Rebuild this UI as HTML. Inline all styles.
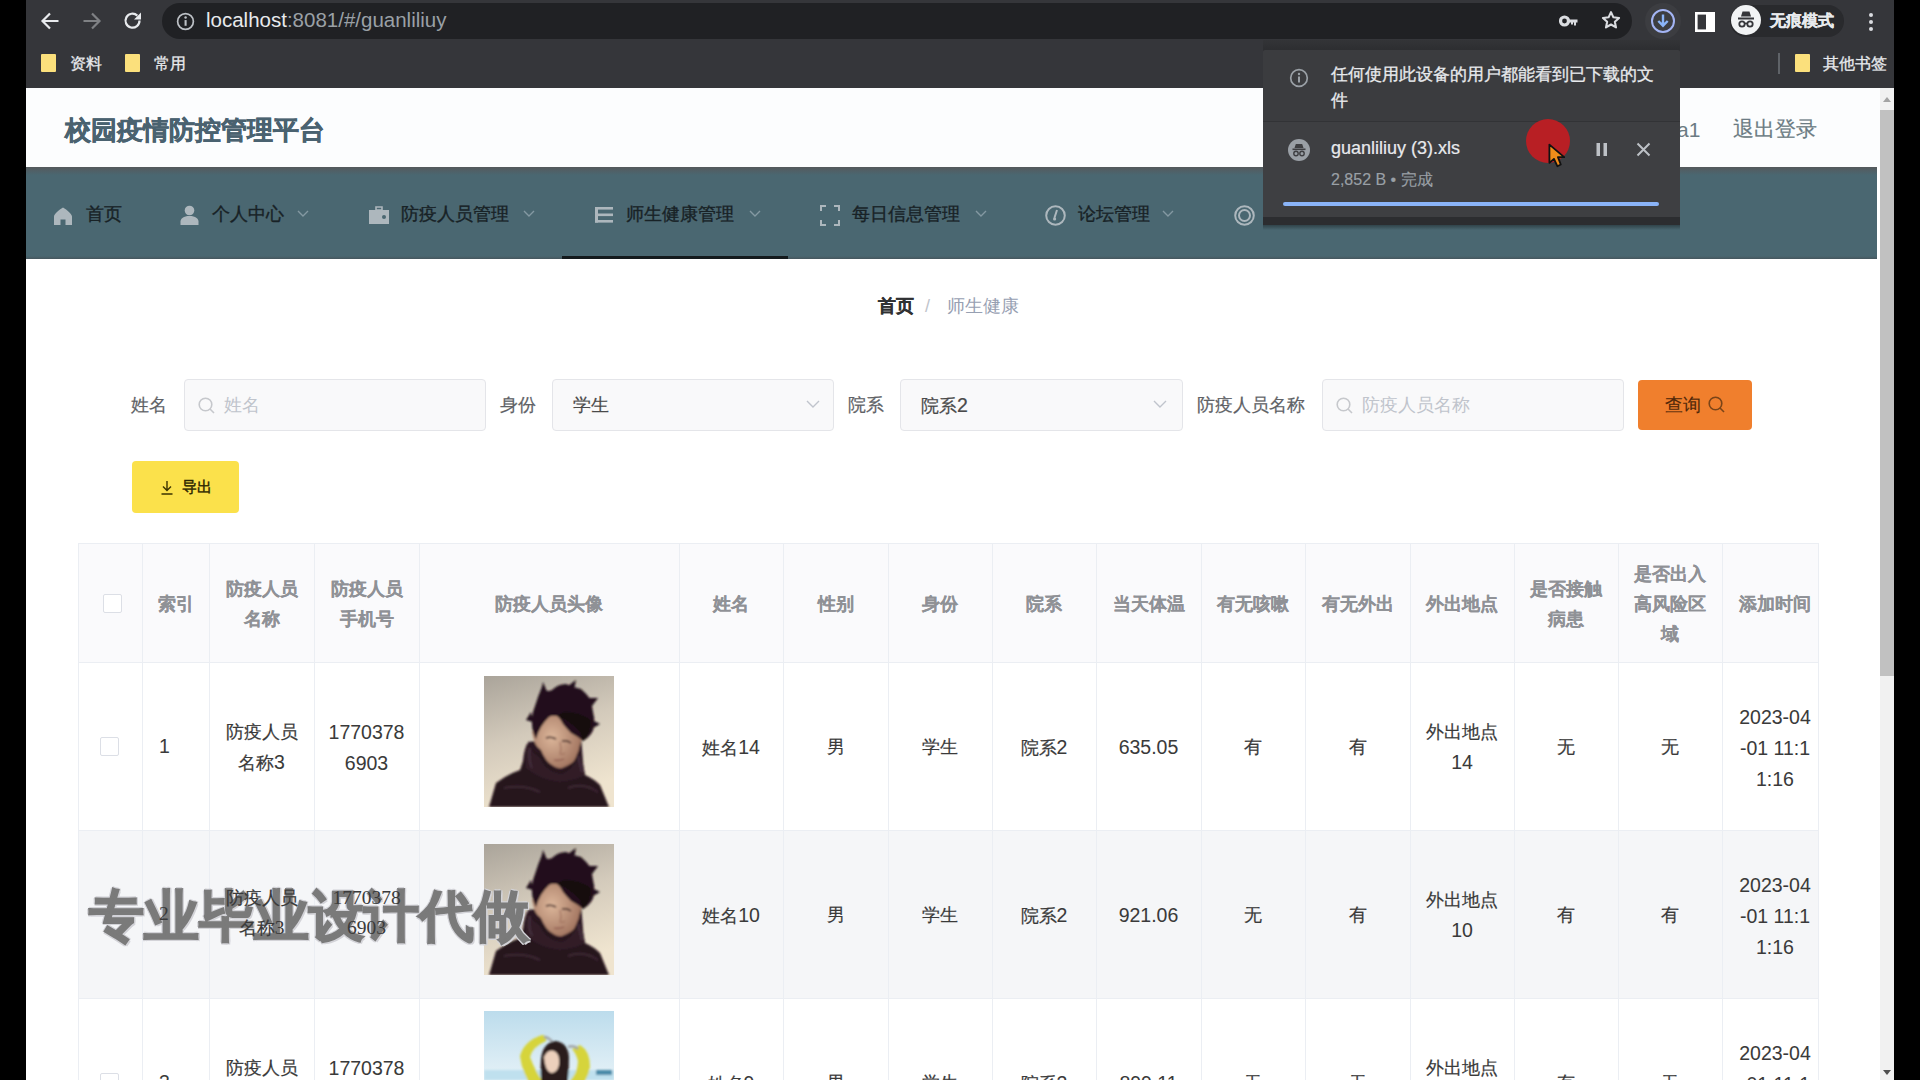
<!DOCTYPE html>
<html><head><meta charset="utf-8">
<style>
*{box-sizing:border-box;margin:0;padding:0}
html,body{width:1920px;height:1080px;overflow:hidden;background:#000;font-family:"Liberation Sans",sans-serif}
.a{position:absolute}
.d{font-size:19.5px;-webkit-text-stroke-width:0.05px}
.bm{font-size:16px;color:#e8eaed;white-space:nowrap;line-height:18px;-webkit-text-stroke:0.3px #e8eaed}
.fold{width:15px;height:18px;background:#fbe07c;border-radius:1px}
</style></head><body>
<div class="a" style="left:26px;top:0px;width:1868px;height:88px;background:#35363a;"></div>
<svg class="a" style="left:40px;top:11px" width="20" height="20" viewBox="0 0 20 20"><path d="M18.5 10H3M10 2.5L2.5 10l7.5 7.5" stroke="#e8eaed" stroke-width="2.2" fill="none"/></svg>
<svg class="a" style="left:82px;top:11px" width="20" height="20" viewBox="0 0 20 20"><path d="M1.5 10H17M10 2.5l7.5 7.5-7.5 7.5" stroke="#7f8184" stroke-width="2.2" fill="none"/></svg>
<svg class="a" style="left:123px;top:11px" width="20" height="20" viewBox="0 0 20 20"><path d="M16.5 9.5A7 7 0 1 1 14.3 4.6" stroke="#e8eaed" stroke-width="2.2" fill="none"/><path d="M18 1.5v7h-7z" fill="#e8eaed"/></svg>
<div class="a" style="left:162px;top:3px;width:1470px;height:36px;background:#202124;border-radius:18px"></div>
<svg class="a" style="left:176px;top:12px" width="19" height="19" viewBox="0 0 20 20"><circle cx="10" cy="10" r="8.3" stroke="#bdc1c6" stroke-width="1.8" fill="none"/><rect x="9" y="8.5" width="2.2" height="6" fill="#bdc1c6"/><circle cx="10.1" cy="5.9" r="1.3" fill="#bdc1c6"/></svg>
<div class="a" style="left:206px;top:8px;font-size:20.5px;line-height:24px;color:#9aa0a6;white-space:nowrap;letter-spacing:0px"><span style="color:#e8eaed">localhost</span>:8081/#/guanliliuy</div>
<svg class="a" style="left:1559px;top:13px" width="20" height="16" viewBox="0 0 20 16"><circle cx="5.5" cy="8" r="4" stroke="#dadce0" stroke-width="3.2" fill="none"/><path d="M9.5 6.5h9v3h-1.5v3h-2v-3h-1v2h-2v-2h-2.5z" fill="#dadce0"/></svg>
<svg class="a" style="left:1601px;top:10px" width="20" height="20" viewBox="0 0 24 24"><path d="M12 2.5l2.9 6.3 6.8.7-5.1 4.6 1.4 6.8L12 17.4l-6 3.5 1.4-6.8-5.1-4.6 6.8-.7z" stroke="#dadce0" stroke-width="2.5" fill="none" stroke-linejoin="round"/></svg>
<div class="a" style="left:1645px;top:3px;width:36px;height:36px;background:#3c3d41;border-radius:18px"></div>
<svg class="a" style="left:1650px;top:8px" width="26" height="26" viewBox="0 0 26 26"><circle cx="13" cy="13" r="11" stroke="#a3b4f4" stroke-width="2" fill="none"/><path d="M13 6.5v11M8.3 13l4.7 4.7 4.7-4.7" stroke="#8ab4f8" stroke-width="2.4" fill="none"/></svg>
<svg class="a" style="left:1695px;top:12px" width="20" height="20" viewBox="0 0 20 20"><rect x="1.3" y="1.3" width="17.4" height="17.4" stroke="#fff" stroke-width="2.6" fill="none"/><rect x="11" y="1" width="8" height="18" fill="#fff"/></svg>
<div class="a" style="left:1730px;top:5px;width:114px;height:32px;background:#292a2d;border-radius:16px"></div>
<div class="a" style="left:1731px;top:5px;width:30px;height:30px;background:#f1f3f4;border-radius:15px"></div>
<svg class="a" style="left:1735px;top:9px" width="22" height="22" viewBox="0 0 22 22"><path d="M6 7.5l1.5-5h7l1.5 5z" fill="#35363a"/><rect x="3" y="8.5" width="16" height="2" fill="#35363a"/><circle cx="7" cy="15" r="2.7" stroke="#35363a" stroke-width="1.8" fill="none"/><circle cx="15" cy="15" r="2.7" stroke="#35363a" stroke-width="1.8" fill="none"/><path d="M9.7 14.5h2.6" stroke="#35363a" stroke-width="1.6"/></svg>
<div class="a bm" style="left:1770px;top:12px;font-weight:bold">无痕模式</div>
<svg class="a" style="left:1868px;top:12px" width="6" height="20" viewBox="0 0 6 20"><circle cx="3" cy="3" r="2" fill="#dadce0"/><circle cx="3" cy="10" r="2" fill="#dadce0"/><circle cx="3" cy="17" r="2" fill="#dadce0"/></svg>
<div class="a fold" style="left:41px;top:54px"></div>
<div class="a" style="left:70px;top:55px;font-size:16px;line-height:18px;color:#e8eaed;font-weight:normal;white-space:nowrap;-webkit-text-stroke:0.3px #e8eaed;">资料</div>
<div class="a fold" style="left:125px;top:54px"></div>
<div class="a" style="left:154px;top:55px;font-size:16px;line-height:18px;color:#e8eaed;font-weight:normal;white-space:nowrap;-webkit-text-stroke:0.3px #e8eaed;">常用</div>
<div class="a" style="left:1778px;top:53px;width:2px;height:21px;background:#5f6368;"></div>
<div class="a fold" style="left:1795px;top:54px"></div>
<div class="a" style="left:1823px;top:55px;font-size:16px;line-height:18px;color:#e8eaed;font-weight:normal;white-space:nowrap;-webkit-text-stroke:0.3px #e8eaed;">其他书签</div>
<div class="a" style="left:26px;top:88px;width:1854px;height:992px;background:#fff;"></div>
<div class="a" style="left:26px;top:88px;width:1854px;height:79px;background:#fcfdfe;"></div>
<div class="a" style="left:65px;top:113px;font-size:26px;line-height:35px;color:#4a6270;font-weight:bold;white-space:nowrap;-webkit-text-stroke:0.5px #4a6270;">校园疫情防控管理平台</div>
<div class="a" style="left:1677px;top:119px;font-size:21px;line-height:21px;color:#6b7b83;font-weight:normal;white-space:nowrap;">a1</div>
<div class="a" style="left:1733px;top:118px;font-size:21px;line-height:21px;color:#6b7b83;font-weight:normal;white-space:nowrap;-webkit-text-stroke:0.2px #6b7b83;">退出登录</div>
<div class="a" style="left:26px;top:167px;width:1851px;height:92px;background:#4a6771;"></div>
<div class="a" style="left:26px;top:167px;width:1851px;height:8px;background:linear-gradient(#55595c,rgba(74,103,113,0));"></div>
<div class="a" style="left:26px;top:256px;width:1851px;height:3px;background:linear-gradient(rgba(74,103,113,0),#46565d);"></div>
<div class="a" style="left:562px;top:256px;width:226px;height:3px;background:#141a1d;"></div>
<svg class="a" style="left:53px;top:206px" width="20" height="19" viewBox="0 0 20 19"><path d="M10 1.5C6 4 1 8 1 10.5V19h6.5v-5.5h5V19H19v-8.5C19 8 14 4 10 1.5z" fill="#adb7bd"/></svg>
<svg class="a" style="left:180px;top:205px" width="19" height="20" viewBox="0 0 19 20"><circle cx="9.5" cy="5.5" r="4.8" fill="#adb7bd"/><path d="M0.5 20v-3.5c0-3 3-5.5 9-5.5s9 2.5 9 5.5V20z" fill="#adb7bd"/></svg>
<svg class="a" style="left:369px;top:206px" width="20" height="18" viewBox="0 0 20 18"><path d="M7 1h6v3H7z" stroke="#adb7bd" stroke-width="1.6" fill="none"/><rect x="0" y="4" width="20" height="14" fill="#adb7bd"/><circle cx="15" cy="11" r="2" fill="#4a6771"/></svg>
<svg class="a" style="left:595px;top:207px" width="18" height="16" viewBox="0 0 18 16"><rect x="0" y="0" width="18" height="2.6" fill="#adb7bd"/><rect x="0" y="6.5" width="18" height="2.6" fill="#adb7bd"/><rect x="0" y="13" width="18" height="2.6" fill="#adb7bd"/><rect x="0" y="0" width="3" height="15.6" fill="#adb7bd"/></svg>
<svg class="a" style="left:820px;top:205px" width="20" height="21" viewBox="0 0 20 21"><path d="M1 6V1h5M14 1h5v5M19 15v5h-5M6 20H1v-5" stroke="#adb7bd" stroke-width="2" fill="none"/></svg>
<svg class="a" style="left:1045px;top:205px" width="21" height="21" viewBox="0 0 21 21"><circle cx="10.5" cy="10.5" r="9.3" stroke="#adb7bd" stroke-width="2" fill="none"/><path d="M12 5l-2.6 8" stroke="#adb7bd" stroke-width="2"/><circle cx="9.6" cy="14" r="1.6" fill="#adb7bd"/></svg>
<svg class="a" style="left:1234px;top:205px" width="21" height="21" viewBox="0 0 21 21"><circle cx="10.5" cy="10.5" r="9.3" stroke="#adb7bd" stroke-width="2" fill="none"/><circle cx="10.5" cy="10.5" r="5.5" stroke="#adb7bd" stroke-width="2" fill="none"/></svg>
<div class="a" style="left:86px;top:205px;font-size:18px;line-height:18px;color:#182226;font-weight:normal;white-space:nowrap;-webkit-text-stroke:0.35px #182226;">首页</div>
<div class="a" style="left:212px;top:205px;font-size:18px;line-height:18px;color:#182226;font-weight:normal;white-space:nowrap;-webkit-text-stroke:0.35px #182226;">个人中心</div>
<div class="a" style="left:401px;top:205px;font-size:18px;line-height:18px;color:#182226;font-weight:normal;white-space:nowrap;-webkit-text-stroke:0.35px #182226;">防疫人员管理</div>
<div class="a" style="left:626px;top:205px;font-size:18px;line-height:18px;color:#182226;font-weight:normal;white-space:nowrap;-webkit-text-stroke:0.35px #182226;">师生健康管理</div>
<div class="a" style="left:852px;top:205px;font-size:18px;line-height:18px;color:#182226;font-weight:normal;white-space:nowrap;-webkit-text-stroke:0.35px #182226;">每日信息管理</div>
<div class="a" style="left:1078px;top:205px;font-size:18px;line-height:18px;color:#182226;font-weight:normal;white-space:nowrap;-webkit-text-stroke:0.35px #182226;">论坛管理</div>
<svg class="a" style="left:297px;top:210px" width="12" height="8" viewBox="0 0 12 8"><path d="M1 1l5 5 5-5" stroke="#8499a2" stroke-width="1.4" fill="none"/></svg>
<svg class="a" style="left:523px;top:210px" width="12" height="8" viewBox="0 0 12 8"><path d="M1 1l5 5 5-5" stroke="#8499a2" stroke-width="1.4" fill="none"/></svg>
<svg class="a" style="left:749px;top:210px" width="12" height="8" viewBox="0 0 12 8"><path d="M1 1l5 5 5-5" stroke="#8499a2" stroke-width="1.4" fill="none"/></svg>
<svg class="a" style="left:975px;top:210px" width="12" height="8" viewBox="0 0 12 8"><path d="M1 1l5 5 5-5" stroke="#8499a2" stroke-width="1.4" fill="none"/></svg>
<svg class="a" style="left:1162px;top:210px" width="12" height="8" viewBox="0 0 12 8"><path d="M1 1l5 5 5-5" stroke="#8499a2" stroke-width="1.4" fill="none"/></svg>
<div class="a" style="left:878px;top:297px;font-size:18px;line-height:18px;color:#303133;font-weight:bold;white-space:nowrap;-webkit-text-stroke:0.2px #303133;">首页</div>
<div class="a" style="left:925px;top:297px;font-size:18px;line-height:18px;color:#c0c4cc;font-weight:normal;white-space:nowrap;">/</div>
<div class="a" style="left:947px;top:297px;font-size:18px;line-height:18px;color:#97a0b2;font-weight:normal;white-space:nowrap;">师生健康</div>
<div class="a" style="left:131px;top:396px;font-size:18px;line-height:18px;color:#606266;font-weight:normal;white-space:nowrap;-webkit-text-stroke:0.2px #606266;">姓名</div>
<div class="a" style="left:500px;top:396px;font-size:18px;line-height:18px;color:#606266;font-weight:normal;white-space:nowrap;-webkit-text-stroke:0.2px #606266;">身份</div>
<div class="a" style="left:848px;top:396px;font-size:18px;line-height:18px;color:#606266;font-weight:normal;white-space:nowrap;-webkit-text-stroke:0.2px #606266;">院系</div>
<div class="a" style="left:1197px;top:396px;font-size:18px;line-height:18px;color:#606266;font-weight:normal;white-space:nowrap;-webkit-text-stroke:0.2px #606266;">防疫人员名称</div>
<div class="a" style="left:184px;top:379px;width:302px;height:52px;border:1px solid #e4e5e9;border-radius:4px;background:#f9f9fa"></div>
<div class="a" style="left:552px;top:379px;width:282px;height:52px;border:1px solid #e4e5e9;border-radius:4px;background:#f9f9fa"></div>
<div class="a" style="left:900px;top:379px;width:283px;height:52px;border:1px solid #e4e5e9;border-radius:4px;background:#f9f9fa"></div>
<div class="a" style="left:1322px;top:379px;width:302px;height:52px;border:1px solid #e4e5e9;border-radius:4px;background:#f9f9fa"></div>
<svg class="a" style="left:198px;top:397px" width="17" height="17" viewBox="0 0 17 17"><circle cx="7.5" cy="7.5" r="6.3" stroke="#c6c8cc" stroke-width="1.6" fill="none"/><path d="M12 12l4 4" stroke="#c6c8cc" stroke-width="1.6"/></svg>
<div class="a" style="left:224px;top:396px;font-size:18px;line-height:18px;color:#c0c4cc;font-weight:normal;white-space:nowrap;">姓名</div>
<svg class="a" style="left:1336px;top:397px" width="17" height="17" viewBox="0 0 17 17"><circle cx="7.5" cy="7.5" r="6.3" stroke="#c6c8cc" stroke-width="1.6" fill="none"/><path d="M12 12l4 4" stroke="#c6c8cc" stroke-width="1.6"/></svg>
<div class="a" style="left:1362px;top:396px;font-size:18px;line-height:18px;color:#c0c4cc;font-weight:normal;white-space:nowrap;">防疫人员名称</div>
<div class="a" style="left:573px;top:396px;font-size:18px;line-height:18px;color:#4a4a4a;font-weight:normal;white-space:nowrap;-webkit-text-stroke:0.2px #4a4a4a;">学生</div>
<div class="a" style="left:921px;top:396px;font-size:18px;line-height:18px;color:#4a4a4a;font-weight:normal;white-space:nowrap;-webkit-text-stroke:0.2px #4a4a4a;">院系<span style="font-size:19.5px">2</span></div>
<svg class="a" style="left:806px;top:400px" width="14" height="9" viewBox="0 0 14 9"><path d="M1 1l6 6 6-6" stroke="#c0c4cc" stroke-width="1.4" fill="none"/></svg>
<svg class="a" style="left:1153px;top:400px" width="14" height="9" viewBox="0 0 14 9"><path d="M1 1l6 6 6-6" stroke="#c0c4cc" stroke-width="1.4" fill="none"/></svg>
<div class="a" style="left:1638px;top:380px;width:114px;height:50px;background:#f07f2d;border-radius:4px"></div>
<div class="a" style="left:1665px;top:396px;font-size:18px;line-height:18px;color:#50280a;font-weight:normal;white-space:nowrap;-webkit-text-stroke:0.15px #50280a;">查询</div>
<svg class="a" style="left:1708px;top:396px" width="17" height="17" viewBox="0 0 17 17"><circle cx="7.5" cy="7.5" r="6.3" stroke="#7a4418" stroke-width="1.6" fill="none"/><path d="M12 12l4 4" stroke="#7a4418" stroke-width="1.6"/></svg>
<div class="a" style="left:132px;top:461px;width:107px;height:52px;background:#fbe14b;border-radius:4px"></div>
<svg class="a" style="left:161px;top:481px" width="12" height="14" viewBox="0 0 12 14"><path d="M6 0v9M2 5.5l4 4 4-4M0.5 13h11" stroke="#3b3300" stroke-width="1.4" fill="none"/></svg>
<div class="a" style="left:182px;top:479px;font-size:15px;line-height:15px;color:#2b2500;font-weight:normal;white-space:nowrap;-webkit-text-stroke:0.45px #2b2500;">导出</div>
<div class="a" style="left:78px;top:543px;width:1740px;height:119px;background:#fafafc;"></div>
<div class="a" style="left:78px;top:830px;width:1740px;height:168px;background:#f5f6f8;"></div>
<div class="a" style="left:78px;top:543px;width:1741px;height:1px;background:#ebeef3;"></div>
<div class="a" style="left:78px;top:662px;width:1741px;height:1px;background:#ebeef3;"></div>
<div class="a" style="left:78px;top:830px;width:1741px;height:1px;background:#ebeef3;"></div>
<div class="a" style="left:78px;top:998px;width:1741px;height:1px;background:#ebeef3;"></div>
<div class="a" style="left:78px;top:543px;width:1px;height:537px;background:#ebeef3;"></div>
<div class="a" style="left:142px;top:543px;width:1px;height:537px;background:#ebeef3;"></div>
<div class="a" style="left:209px;top:543px;width:1px;height:537px;background:#ebeef3;"></div>
<div class="a" style="left:314px;top:543px;width:1px;height:537px;background:#ebeef3;"></div>
<div class="a" style="left:419px;top:543px;width:1px;height:537px;background:#ebeef3;"></div>
<div class="a" style="left:679px;top:543px;width:1px;height:537px;background:#ebeef3;"></div>
<div class="a" style="left:783px;top:543px;width:1px;height:537px;background:#ebeef3;"></div>
<div class="a" style="left:888px;top:543px;width:1px;height:537px;background:#ebeef3;"></div>
<div class="a" style="left:992px;top:543px;width:1px;height:537px;background:#ebeef3;"></div>
<div class="a" style="left:1096px;top:543px;width:1px;height:537px;background:#ebeef3;"></div>
<div class="a" style="left:1201px;top:543px;width:1px;height:537px;background:#ebeef3;"></div>
<div class="a" style="left:1305px;top:543px;width:1px;height:537px;background:#ebeef3;"></div>
<div class="a" style="left:1410px;top:543px;width:1px;height:537px;background:#ebeef3;"></div>
<div class="a" style="left:1514px;top:543px;width:1px;height:537px;background:#ebeef3;"></div>
<div class="a" style="left:1618px;top:543px;width:1px;height:537px;background:#ebeef3;"></div>
<div class="a" style="left:1722px;top:543px;width:1px;height:537px;background:#ebeef3;"></div>
<div class="a" style="left:1818px;top:543px;width:1px;height:537px;background:#ebeef3;"></div>
<svg class="a" style="left:484px;top:676px" width="130" height="131" viewBox="0 0 130 131">
<defs><linearGradient id="mbga" x1="0" y1="0" x2="0.3" y2="1"><stop offset="0" stop-color="#aaa49a"/><stop offset="0.5" stop-color="#d3cabb"/><stop offset="1" stop-color="#efe4cf"/></linearGradient>
<radialGradient id="mfacea" cx="0.4" cy="0.45" r="0.6"><stop offset="0" stop-color="#dcb69a"/><stop offset="1" stop-color="#a27560"/></radialGradient>
<filter id="bla" x="-10%" y="-10%" width="120%" height="120%"><feGaussianBlur stdDeviation="1"/></filter></defs>
<rect width="130" height="131" fill="url(#mbga)"/>
<g filter="url(#bla)">
<path d="M44 66 L40 92 Q70 104 100 98 L97 60 Z" fill="#2c1820"/>
<path d="M48 56 Q50 70 57 74 Q62 86 68 89 Q74 93 78 92 Q88 88 91 84 Q95 76 95 72 Q97 66 98 60 L97 44 L72 36 L56 42 Z" fill="url(#mfacea)"/>
<path d="M62 62 Q67 60 72 63 M78 65 Q83 64 87 67" stroke="#3a2020" stroke-width="1.5" fill="none"/>
<path d="M76 66 Q78 74 76 78 Q79 79 81 77" stroke="#9a6a58" stroke-width="1" fill="none"/>
<path d="M70 84 Q75 85 80 83" stroke="#8a5248" stroke-width="1.2" fill="none"/>
<path d="M5 131 L12 107 Q24 98 36 94 L39 85 Q40 74 43 68 Q50 76 56 78 Q64 92 76 96 Q88 94 94 76 Q99 86 101 99 Q110 103 116 109 L125 131 Z" fill="#26121d"/>
<path d="M43 68 Q40 80 42 92 Q56 104 76 106 Q94 104 101 99 Q99 86 95 75 Q92 92 78 98 Q62 96 56 82 Q48 76 43 68 Z" fill="#301c28"/>
<path d="M20 112 Q40 108 56 116 M84 112 Q100 106 114 116" stroke="#54404c" stroke-width="2" fill="none" opacity="0.5"/>
<path d="M46 72 Q44 84 48 92 M94 80 Q96 88 98 96" stroke="#5a4654" stroke-width="1.5" fill="none" opacity="0.6"/>
<path d="M52 63 Q48 55 48 48 Q47 40 51 30 Q54 20 58 11 Q62 17 68 14 Q74 8 82 8 Q90 12 97 13 Q103 18 107 24 Q108 30 109 36 Q111 42 110 49 Q110 54 107 58 Q104 62 99 65 Q93 60 87 57 Q82 52 79 48 Q76 42 73 40 Q68 39 65 41 Q60 46 57 51 Q54 56 52 63 Z" fill="#20101a"/>
<path d="M73 40 Q86 44 96 56 L99 65 Q108 56 106 44 Q96 36 80 36 Z" fill="#160810"/>
<path d="M56 20 L59 6 L64 18 Z M84 10 L92 4 L90 14 Z M104 22 L114 22 L108 30 Z M108 44 L116 48 L109 52 Z M47 36 L42 44 L49 46 Z" fill="#20101a"/>
</g></svg>
<svg class="a" style="left:484px;top:844px" width="130" height="131" viewBox="0 0 130 131">
<defs><linearGradient id="mbgb" x1="0" y1="0" x2="0.3" y2="1"><stop offset="0" stop-color="#aaa49a"/><stop offset="0.5" stop-color="#d3cabb"/><stop offset="1" stop-color="#efe4cf"/></linearGradient>
<radialGradient id="mfaceb" cx="0.4" cy="0.45" r="0.6"><stop offset="0" stop-color="#dcb69a"/><stop offset="1" stop-color="#a27560"/></radialGradient>
<filter id="blb" x="-10%" y="-10%" width="120%" height="120%"><feGaussianBlur stdDeviation="1"/></filter></defs>
<rect width="130" height="131" fill="url(#mbgb)"/>
<g filter="url(#blb)">
<path d="M44 66 L40 92 Q70 104 100 98 L97 60 Z" fill="#2c1820"/>
<path d="M48 56 Q50 70 57 74 Q62 86 68 89 Q74 93 78 92 Q88 88 91 84 Q95 76 95 72 Q97 66 98 60 L97 44 L72 36 L56 42 Z" fill="url(#mfaceb)"/>
<path d="M62 62 Q67 60 72 63 M78 65 Q83 64 87 67" stroke="#3a2020" stroke-width="1.5" fill="none"/>
<path d="M76 66 Q78 74 76 78 Q79 79 81 77" stroke="#9a6a58" stroke-width="1" fill="none"/>
<path d="M70 84 Q75 85 80 83" stroke="#8a5248" stroke-width="1.2" fill="none"/>
<path d="M5 131 L12 107 Q24 98 36 94 L39 85 Q40 74 43 68 Q50 76 56 78 Q64 92 76 96 Q88 94 94 76 Q99 86 101 99 Q110 103 116 109 L125 131 Z" fill="#26121d"/>
<path d="M43 68 Q40 80 42 92 Q56 104 76 106 Q94 104 101 99 Q99 86 95 75 Q92 92 78 98 Q62 96 56 82 Q48 76 43 68 Z" fill="#301c28"/>
<path d="M20 112 Q40 108 56 116 M84 112 Q100 106 114 116" stroke="#54404c" stroke-width="2" fill="none" opacity="0.5"/>
<path d="M46 72 Q44 84 48 92 M94 80 Q96 88 98 96" stroke="#5a4654" stroke-width="1.5" fill="none" opacity="0.6"/>
<path d="M52 63 Q48 55 48 48 Q47 40 51 30 Q54 20 58 11 Q62 17 68 14 Q74 8 82 8 Q90 12 97 13 Q103 18 107 24 Q108 30 109 36 Q111 42 110 49 Q110 54 107 58 Q104 62 99 65 Q93 60 87 57 Q82 52 79 48 Q76 42 73 40 Q68 39 65 41 Q60 46 57 51 Q54 56 52 63 Z" fill="#20101a"/>
<path d="M73 40 Q86 44 96 56 L99 65 Q108 56 106 44 Q96 36 80 36 Z" fill="#160810"/>
<path d="M56 20 L59 6 L64 18 Z M84 10 L92 4 L90 14 Z M104 22 L114 22 L108 30 Z M108 44 L116 48 L109 52 Z M47 36 L42 44 L49 46 Z" fill="#20101a"/>
</g></svg>
<svg class="a" style="left:484px;top:1011px" width="130" height="131" viewBox="0 0 130 131">
<defs><linearGradient id="gbg" x1="0" y1="0" x2="0" y2="1"><stop offset="0" stop-color="#bcdcec"/><stop offset="0.5" stop-color="#e4f1f7"/><stop offset="1" stop-color="#d8ecf4"/></linearGradient><filter id="gbl"><feGaussianBlur stdDeviation="1"/></filter></defs>
<rect width="130" height="131" fill="url(#gbg)"/>
<g filter="url(#gbl)">
<rect x="0" y="59" width="130" height="10" fill="#bfe0ee"/>
<path d="M112 59 h16 v5 h-16z" fill="#4a8aa8"/>
<path d="M36 45 Q40 30 58 24 Q64 24 62 30 Q48 36 46 46 Q52 62 60 72 L50 80 Q38 62 36 45 Z" fill="#d6d43a"/>
<path d="M96 34 Q106 40 106 56 Q104 70 92 80 L84 72 Q94 62 94 50 Q92 42 88 38 Z" fill="#d6d43a"/>
<path d="M60 26 Q66 26 70 34" stroke="#a0a4a8" stroke-width="2.5" fill="none"/><path d="M84 36 Q90 34 94 38" stroke="#a0a4a8" stroke-width="2.5" fill="none"/>
<path d="M57 48 Q59 31 72 30 Q84 32 85 46 Q85 66 82 80 L58 80 Q56 62 57 48 Z" fill="#2a1c1c"/>
<path d="M60 46 Q64 38 70 40 Q76 42 75 54 Q73 62 67 62 Q61 60 60 46 Z" fill="#ecd0bc"/>
</g></svg>
<div class="a" style="left:89px;top:880px;font-size:55px;line-height:72px;font-weight:bold;color:#7a7a7a;white-space:nowrap;-webkit-text-stroke:1.6px #7a7a7a;text-shadow:2px 0px 0 #d3d3d8,-2px 0px 0 #d3d3d8,0px 2px 0 #d3d3d8,0px -2px 0 #d3d3d8,1.5px 1.5px 0 #d3d3d8,-1.5px 1.5px 0 #d3d3d8,1.5px -1.5px 0 #d3d3d8,-1.5px -1.5px 0 #d3d3d8">专业毕业设计代做</div>
<div class="a" style="left:142px;top:589.0px;width:67px;text-align:center;font-size:18px;line-height:30px;color:#8f9196;font-weight:bold;white-space:nowrap;-webkit-text-stroke:0.1px #8f9196;">索引</div>
<div class="a" style="left:209px;top:574.0px;width:105px;text-align:center;font-size:18px;line-height:30px;color:#8f9196;font-weight:bold;white-space:nowrap;-webkit-text-stroke:0.1px #8f9196;">防疫人员<br>名称</div>
<div class="a" style="left:314px;top:574.0px;width:105px;text-align:center;font-size:18px;line-height:30px;color:#8f9196;font-weight:bold;white-space:nowrap;-webkit-text-stroke:0.1px #8f9196;">防疫人员<br>手机号</div>
<div class="a" style="left:419px;top:589.0px;width:260px;text-align:center;font-size:18px;line-height:30px;color:#8f9196;font-weight:bold;white-space:nowrap;-webkit-text-stroke:0.1px #8f9196;">防疫人员头像</div>
<div class="a" style="left:679px;top:589.0px;width:104px;text-align:center;font-size:18px;line-height:30px;color:#8f9196;font-weight:bold;white-space:nowrap;-webkit-text-stroke:0.1px #8f9196;">姓名</div>
<div class="a" style="left:783px;top:589.0px;width:105px;text-align:center;font-size:18px;line-height:30px;color:#8f9196;font-weight:bold;white-space:nowrap;-webkit-text-stroke:0.1px #8f9196;">性别</div>
<div class="a" style="left:888px;top:589.0px;width:104px;text-align:center;font-size:18px;line-height:30px;color:#8f9196;font-weight:bold;white-space:nowrap;-webkit-text-stroke:0.1px #8f9196;">身份</div>
<div class="a" style="left:992px;top:589.0px;width:104px;text-align:center;font-size:18px;line-height:30px;color:#8f9196;font-weight:bold;white-space:nowrap;-webkit-text-stroke:0.1px #8f9196;">院系</div>
<div class="a" style="left:1096px;top:589.0px;width:105px;text-align:center;font-size:18px;line-height:30px;color:#8f9196;font-weight:bold;white-space:nowrap;-webkit-text-stroke:0.1px #8f9196;">当天体温</div>
<div class="a" style="left:1201px;top:589.0px;width:104px;text-align:center;font-size:18px;line-height:30px;color:#8f9196;font-weight:bold;white-space:nowrap;-webkit-text-stroke:0.1px #8f9196;">有无咳嗽</div>
<div class="a" style="left:1305px;top:589.0px;width:105px;text-align:center;font-size:18px;line-height:30px;color:#8f9196;font-weight:bold;white-space:nowrap;-webkit-text-stroke:0.1px #8f9196;">有无外出</div>
<div class="a" style="left:1410px;top:589.0px;width:104px;text-align:center;font-size:18px;line-height:30px;color:#8f9196;font-weight:bold;white-space:nowrap;-webkit-text-stroke:0.1px #8f9196;">外出地点</div>
<div class="a" style="left:1514px;top:574.0px;width:104px;text-align:center;font-size:18px;line-height:30px;color:#8f9196;font-weight:bold;white-space:nowrap;-webkit-text-stroke:0.1px #8f9196;">是否接触<br>病患</div>
<div class="a" style="left:1618px;top:559.0px;width:104px;text-align:center;font-size:18px;line-height:30px;color:#8f9196;font-weight:bold;white-space:nowrap;-webkit-text-stroke:0.1px #8f9196;">是否出入<br>高风险区<br>域</div>
<div class="a" style="left:1727px;top:589.0px;width:96px;text-align:center;font-size:18px;line-height:30px;color:#8f9196;font-weight:bold;white-space:nowrap;-webkit-text-stroke:0.1px #8f9196;">添加时间</div>
<div class="a" style="left:100px;top:737px;width:19px;height:19px;border:1px solid #dcdfe6;border-radius:2px;background:#fff"></div>
<div class="a" style="left:159px;top:735.0px;font-size:18px;line-height:22px;color:#3a3a3a;font-weight:normal;white-space:nowrap;-webkit-text-stroke:0.2px #3a3a3a;"><span class="d">1</span></div>
<div class="a" style="left:209px;top:717.0px;width:105px;text-align:center;font-size:18px;line-height:30px;color:#3a3a3a;font-weight:normal;white-space:nowrap;-webkit-text-stroke:0.2px #3a3a3a;">防疫人员<br>名称<span class="d">3</span></div>
<div class="a" style="left:314px;top:717.0px;width:105px;text-align:center;font-size:18px;line-height:30px;color:#3a3a3a;font-weight:normal;white-space:nowrap;-webkit-text-stroke:0.2px #3a3a3a;"><span class="d">1770378</span><br><span class="d">6903</span></div>
<div class="a" style="left:679px;top:732.0px;width:104px;text-align:center;font-size:18px;line-height:30px;color:#3a3a3a;font-weight:normal;white-space:nowrap;-webkit-text-stroke:0.2px #3a3a3a;">姓名<span class="d">14</span></div>
<div class="a" style="left:783px;top:732.0px;width:105px;text-align:center;font-size:18px;line-height:30px;color:#3a3a3a;font-weight:normal;white-space:nowrap;-webkit-text-stroke:0.2px #3a3a3a;">男</div>
<div class="a" style="left:888px;top:732.0px;width:104px;text-align:center;font-size:18px;line-height:30px;color:#3a3a3a;font-weight:normal;white-space:nowrap;-webkit-text-stroke:0.2px #3a3a3a;">学生</div>
<div class="a" style="left:992px;top:732.0px;width:104px;text-align:center;font-size:18px;line-height:30px;color:#3a3a3a;font-weight:normal;white-space:nowrap;-webkit-text-stroke:0.2px #3a3a3a;">院系<span class="d">2</span></div>
<div class="a" style="left:1096px;top:732.0px;width:105px;text-align:center;font-size:18px;line-height:30px;color:#3a3a3a;font-weight:normal;white-space:nowrap;-webkit-text-stroke:0.2px #3a3a3a;"><span class="d">635.05</span></div>
<div class="a" style="left:1201px;top:732.0px;width:104px;text-align:center;font-size:18px;line-height:30px;color:#3a3a3a;font-weight:normal;white-space:nowrap;-webkit-text-stroke:0.2px #3a3a3a;">有</div>
<div class="a" style="left:1305px;top:732.0px;width:105px;text-align:center;font-size:18px;line-height:30px;color:#3a3a3a;font-weight:normal;white-space:nowrap;-webkit-text-stroke:0.2px #3a3a3a;">有</div>
<div class="a" style="left:1410px;top:717.0px;width:104px;text-align:center;font-size:18px;line-height:30px;color:#3a3a3a;font-weight:normal;white-space:nowrap;-webkit-text-stroke:0.2px #3a3a3a;">外出地点<br><span class="d">14</span></div>
<div class="a" style="left:1514px;top:732.0px;width:104px;text-align:center;font-size:18px;line-height:30px;color:#3a3a3a;font-weight:normal;white-space:nowrap;-webkit-text-stroke:0.2px #3a3a3a;">无</div>
<div class="a" style="left:1618px;top:732.0px;width:104px;text-align:center;font-size:18px;line-height:30px;color:#3a3a3a;font-weight:normal;white-space:nowrap;-webkit-text-stroke:0.2px #3a3a3a;">无</div>
<div class="a" style="left:1727px;top:702.0px;width:96px;text-align:center;font-size:18px;line-height:30px;color:#3a3a3a;font-weight:normal;white-space:nowrap;-webkit-text-stroke:0.2px #3a3a3a;"><span class="d">2023-04</span><br><span class="d">-01 11:1</span><br><span class="d">1:16</span></div>
<div class="a" style="left:159px;top:903.0px;font-size:18px;line-height:22px;color:#3a3a3a;font-weight:normal;white-space:nowrap;-webkit-text-stroke:0.2px #3a3a3a;font-family:'Liberation Serif',serif;"><span class="d">2</span></div>
<div class="a" style="left:209px;top:882.5px;width:105px;text-align:center;font-size:18px;line-height:30px;color:#3a3a3a;font-weight:normal;white-space:nowrap;-webkit-text-stroke:0.2px #3a3a3a;font-family:'Liberation Serif',serif;">防疫人员<br>名称<span class="d">3</span></div>
<div class="a" style="left:314px;top:882.5px;width:105px;text-align:center;font-size:18px;line-height:30px;color:#3a3a3a;font-weight:normal;white-space:nowrap;-webkit-text-stroke:0.2px #3a3a3a;font-family:'Liberation Serif',serif;"><span class="d">1770378</span><br><span class="d">6903</span></div>
<div class="a" style="left:679px;top:900.0px;width:104px;text-align:center;font-size:18px;line-height:30px;color:#3a3a3a;font-weight:normal;white-space:nowrap;-webkit-text-stroke:0.2px #3a3a3a;">姓名<span class="d">10</span></div>
<div class="a" style="left:783px;top:900.0px;width:105px;text-align:center;font-size:18px;line-height:30px;color:#3a3a3a;font-weight:normal;white-space:nowrap;-webkit-text-stroke:0.2px #3a3a3a;">男</div>
<div class="a" style="left:888px;top:900.0px;width:104px;text-align:center;font-size:18px;line-height:30px;color:#3a3a3a;font-weight:normal;white-space:nowrap;-webkit-text-stroke:0.2px #3a3a3a;">学生</div>
<div class="a" style="left:992px;top:900.0px;width:104px;text-align:center;font-size:18px;line-height:30px;color:#3a3a3a;font-weight:normal;white-space:nowrap;-webkit-text-stroke:0.2px #3a3a3a;">院系<span class="d">2</span></div>
<div class="a" style="left:1096px;top:900.0px;width:105px;text-align:center;font-size:18px;line-height:30px;color:#3a3a3a;font-weight:normal;white-space:nowrap;-webkit-text-stroke:0.2px #3a3a3a;"><span class="d">921.06</span></div>
<div class="a" style="left:1201px;top:900.0px;width:104px;text-align:center;font-size:18px;line-height:30px;color:#3a3a3a;font-weight:normal;white-space:nowrap;-webkit-text-stroke:0.2px #3a3a3a;">无</div>
<div class="a" style="left:1305px;top:900.0px;width:105px;text-align:center;font-size:18px;line-height:30px;color:#3a3a3a;font-weight:normal;white-space:nowrap;-webkit-text-stroke:0.2px #3a3a3a;">有</div>
<div class="a" style="left:1410px;top:885.0px;width:104px;text-align:center;font-size:18px;line-height:30px;color:#3a3a3a;font-weight:normal;white-space:nowrap;-webkit-text-stroke:0.2px #3a3a3a;">外出地点<br><span class="d">10</span></div>
<div class="a" style="left:1514px;top:900.0px;width:104px;text-align:center;font-size:18px;line-height:30px;color:#3a3a3a;font-weight:normal;white-space:nowrap;-webkit-text-stroke:0.2px #3a3a3a;">有</div>
<div class="a" style="left:1618px;top:900.0px;width:104px;text-align:center;font-size:18px;line-height:30px;color:#3a3a3a;font-weight:normal;white-space:nowrap;-webkit-text-stroke:0.2px #3a3a3a;">有</div>
<div class="a" style="left:1727px;top:870.0px;width:96px;text-align:center;font-size:18px;line-height:30px;color:#3a3a3a;font-weight:normal;white-space:nowrap;-webkit-text-stroke:0.2px #3a3a3a;"><span class="d">2023-04</span><br><span class="d">-01 11:1</span><br><span class="d">1:16</span></div>
<div class="a" style="left:100px;top:1073px;width:19px;height:19px;border:1px solid #dcdfe6;border-radius:2px;background:#fff"></div>
<div class="a" style="left:159px;top:1071.0px;font-size:18px;line-height:22px;color:#3a3a3a;font-weight:normal;white-space:nowrap;-webkit-text-stroke:0.2px #3a3a3a;"><span class="d">3</span></div>
<div class="a" style="left:209px;top:1053.0px;width:105px;text-align:center;font-size:18px;line-height:30px;color:#3a3a3a;font-weight:normal;white-space:nowrap;-webkit-text-stroke:0.2px #3a3a3a;">防疫人员<br>名称<span class="d">3</span></div>
<div class="a" style="left:314px;top:1053.0px;width:105px;text-align:center;font-size:18px;line-height:30px;color:#3a3a3a;font-weight:normal;white-space:nowrap;-webkit-text-stroke:0.2px #3a3a3a;"><span class="d">1770378</span><br><span class="d">6903</span></div>
<div class="a" style="left:679px;top:1068.0px;width:104px;text-align:center;font-size:18px;line-height:30px;color:#3a3a3a;font-weight:normal;white-space:nowrap;-webkit-text-stroke:0.2px #3a3a3a;">姓名<span class="d">9</span></div>
<div class="a" style="left:783px;top:1068.0px;width:105px;text-align:center;font-size:18px;line-height:30px;color:#3a3a3a;font-weight:normal;white-space:nowrap;-webkit-text-stroke:0.2px #3a3a3a;">男</div>
<div class="a" style="left:888px;top:1068.0px;width:104px;text-align:center;font-size:18px;line-height:30px;color:#3a3a3a;font-weight:normal;white-space:nowrap;-webkit-text-stroke:0.2px #3a3a3a;">学生</div>
<div class="a" style="left:992px;top:1068.0px;width:104px;text-align:center;font-size:18px;line-height:30px;color:#3a3a3a;font-weight:normal;white-space:nowrap;-webkit-text-stroke:0.2px #3a3a3a;">院系<span class="d">2</span></div>
<div class="a" style="left:1096px;top:1068.0px;width:105px;text-align:center;font-size:18px;line-height:30px;color:#3a3a3a;font-weight:normal;white-space:nowrap;-webkit-text-stroke:0.2px #3a3a3a;"><span class="d">899.11</span></div>
<div class="a" style="left:1201px;top:1068.0px;width:104px;text-align:center;font-size:18px;line-height:30px;color:#3a3a3a;font-weight:normal;white-space:nowrap;-webkit-text-stroke:0.2px #3a3a3a;">无</div>
<div class="a" style="left:1305px;top:1068.0px;width:105px;text-align:center;font-size:18px;line-height:30px;color:#3a3a3a;font-weight:normal;white-space:nowrap;-webkit-text-stroke:0.2px #3a3a3a;">无</div>
<div class="a" style="left:1410px;top:1053.0px;width:104px;text-align:center;font-size:18px;line-height:30px;color:#3a3a3a;font-weight:normal;white-space:nowrap;-webkit-text-stroke:0.2px #3a3a3a;">外出地点<br><span class="d">9</span></div>
<div class="a" style="left:1514px;top:1068.0px;width:104px;text-align:center;font-size:18px;line-height:30px;color:#3a3a3a;font-weight:normal;white-space:nowrap;-webkit-text-stroke:0.2px #3a3a3a;">有</div>
<div class="a" style="left:1618px;top:1068.0px;width:104px;text-align:center;font-size:18px;line-height:30px;color:#3a3a3a;font-weight:normal;white-space:nowrap;-webkit-text-stroke:0.2px #3a3a3a;">无</div>
<div class="a" style="left:1727px;top:1038.0px;width:96px;text-align:center;font-size:18px;line-height:30px;color:#3a3a3a;font-weight:normal;white-space:nowrap;-webkit-text-stroke:0.2px #3a3a3a;"><span class="d">2023-04</span><br><span class="d">-01 11:1</span><br><span class="d">1:16</span></div>
<div class="a" style="left:103px;top:594px;width:19px;height:19px;border:1px solid #dcdfe6;border-radius:2px;background:#fff"></div>
<div class="a" style="left:1880px;top:88px;width:14px;height:992px;background:#f1f1f1;"></div>
<div class="a" style="left:1880px;top:110px;width:14px;height:566px;background:#c1c1c1;"></div>
<svg class="a" style="left:1880px;top:94px" width="14" height="10" viewBox="0 0 14 10"><path d="M3 8h8L7 3z" fill="#a3a3a3"/></svg>
<svg class="a" style="left:1880px;top:1068px" width="14" height="10" viewBox="0 0 14 10"><path d="M3 2h8L7 7z" fill="#505050"/></svg>
<div class="a" style="left:1263px;top:40px;width:417px;height:11px;background:linear-gradient(#333437,#2c2d30);"></div>
<div class="a" style="left:1263px;top:225px;width:417px;height:5px;background:linear-gradient(rgba(0,0,0,0.35),rgba(0,0,0,0));"></div>
<div class="a" style="left:1263px;top:50px;width:417px;height:175px;background:#3b3c3f;border-radius:2px"></div>
<div class="a" style="left:1263px;top:121px;width:417px;height:1px;background:#323336;"></div>
<div class="a" style="left:1263px;top:122px;width:417px;height:95px;background:#3e3f42;"></div>
<div class="a" style="left:1263px;top:217px;width:417px;height:8px;background:#2c2d30;"></div>
<svg class="a" style="left:1289px;top:68px" width="20" height="20" viewBox="0 0 20 20"><circle cx="10" cy="10" r="8.3" stroke="#9aa0a6" stroke-width="1.7" fill="none"/><rect x="9" y="8.5" width="2" height="6" fill="#9aa0a6"/><circle cx="10" cy="6" r="1.2" fill="#9aa0a6"/></svg>
<div class="a" style="left:1331px;top:62px;width:330px;font-size:17px;line-height:26px;color:#e8eaed;white-space:normal;word-break:break-all;-webkit-text-stroke:0.3px #e8eaed">任何使用此设备的用户都能看到已下载的文件</div>
<svg class="a" style="left:1288px;top:139px" width="22" height="22" viewBox="0 0 22 22"><circle cx="11" cy="11" r="11" fill="#9aa0a6"/><path d="M6.5 9l1.3-4h6.4l1.3 4z" fill="#3e3f42"/><rect x="4.5" y="9.5" width="13" height="1.6" fill="#3e3f42"/><circle cx="8" cy="14.5" r="2.2" stroke="#3e3f42" stroke-width="1.4" fill="none"/><circle cx="14" cy="14.5" r="2.2" stroke="#3e3f42" stroke-width="1.4" fill="none"/></svg>
<div class="a" style="left:1331px;top:137.5px;font-size:18px;line-height:20px;color:#e8eaed;font-weight:normal;white-space:nowrap;-webkit-text-stroke:0.2px #e8eaed;">guanliliuy (3).xls</div>
<div class="a" style="left:1331px;top:170px;font-size:16px;line-height:20px;color:#9aa0a6;font-weight:normal;white-space:nowrap;-webkit-text-stroke:0.15px #9aa0a6;">2,852 B • 完成</div>
<div class="a" style="left:1283px;top:202px;width:376px;height:4px;background:#8ab4f8;border-radius:2px"></div>
<svg class="a" style="left:1596px;top:143px" width="12" height="13" viewBox="0 0 12 13"><rect x="0.5" y="0" width="3.5" height="13" fill="#bdc1c6"/><rect x="7.5" y="0" width="3.5" height="13" fill="#bdc1c6"/></svg>
<svg class="a" style="left:1636px;top:142px" width="15" height="15" viewBox="0 0 15 15"><path d="M1.5 1.5l12 12M13.5 1.5l-12 12" stroke="#bdc1c6" stroke-width="2"/></svg>
<div class="a" style="left:1526px;top:119px;width:44px;height:44px;background:#b81f24;border-radius:22px"></div>
<svg class="a" style="left:1546px;top:142px" width="25" height="28" viewBox="0 0 22 24"><path d="M3 2 L3 18 L7 14.5 L10 21 L13 19.5 L10.5 13 L16 13 Z" fill="#f08c1a" stroke="#111" stroke-width="1.6" stroke-linejoin="round"/></svg>
</body></html>
